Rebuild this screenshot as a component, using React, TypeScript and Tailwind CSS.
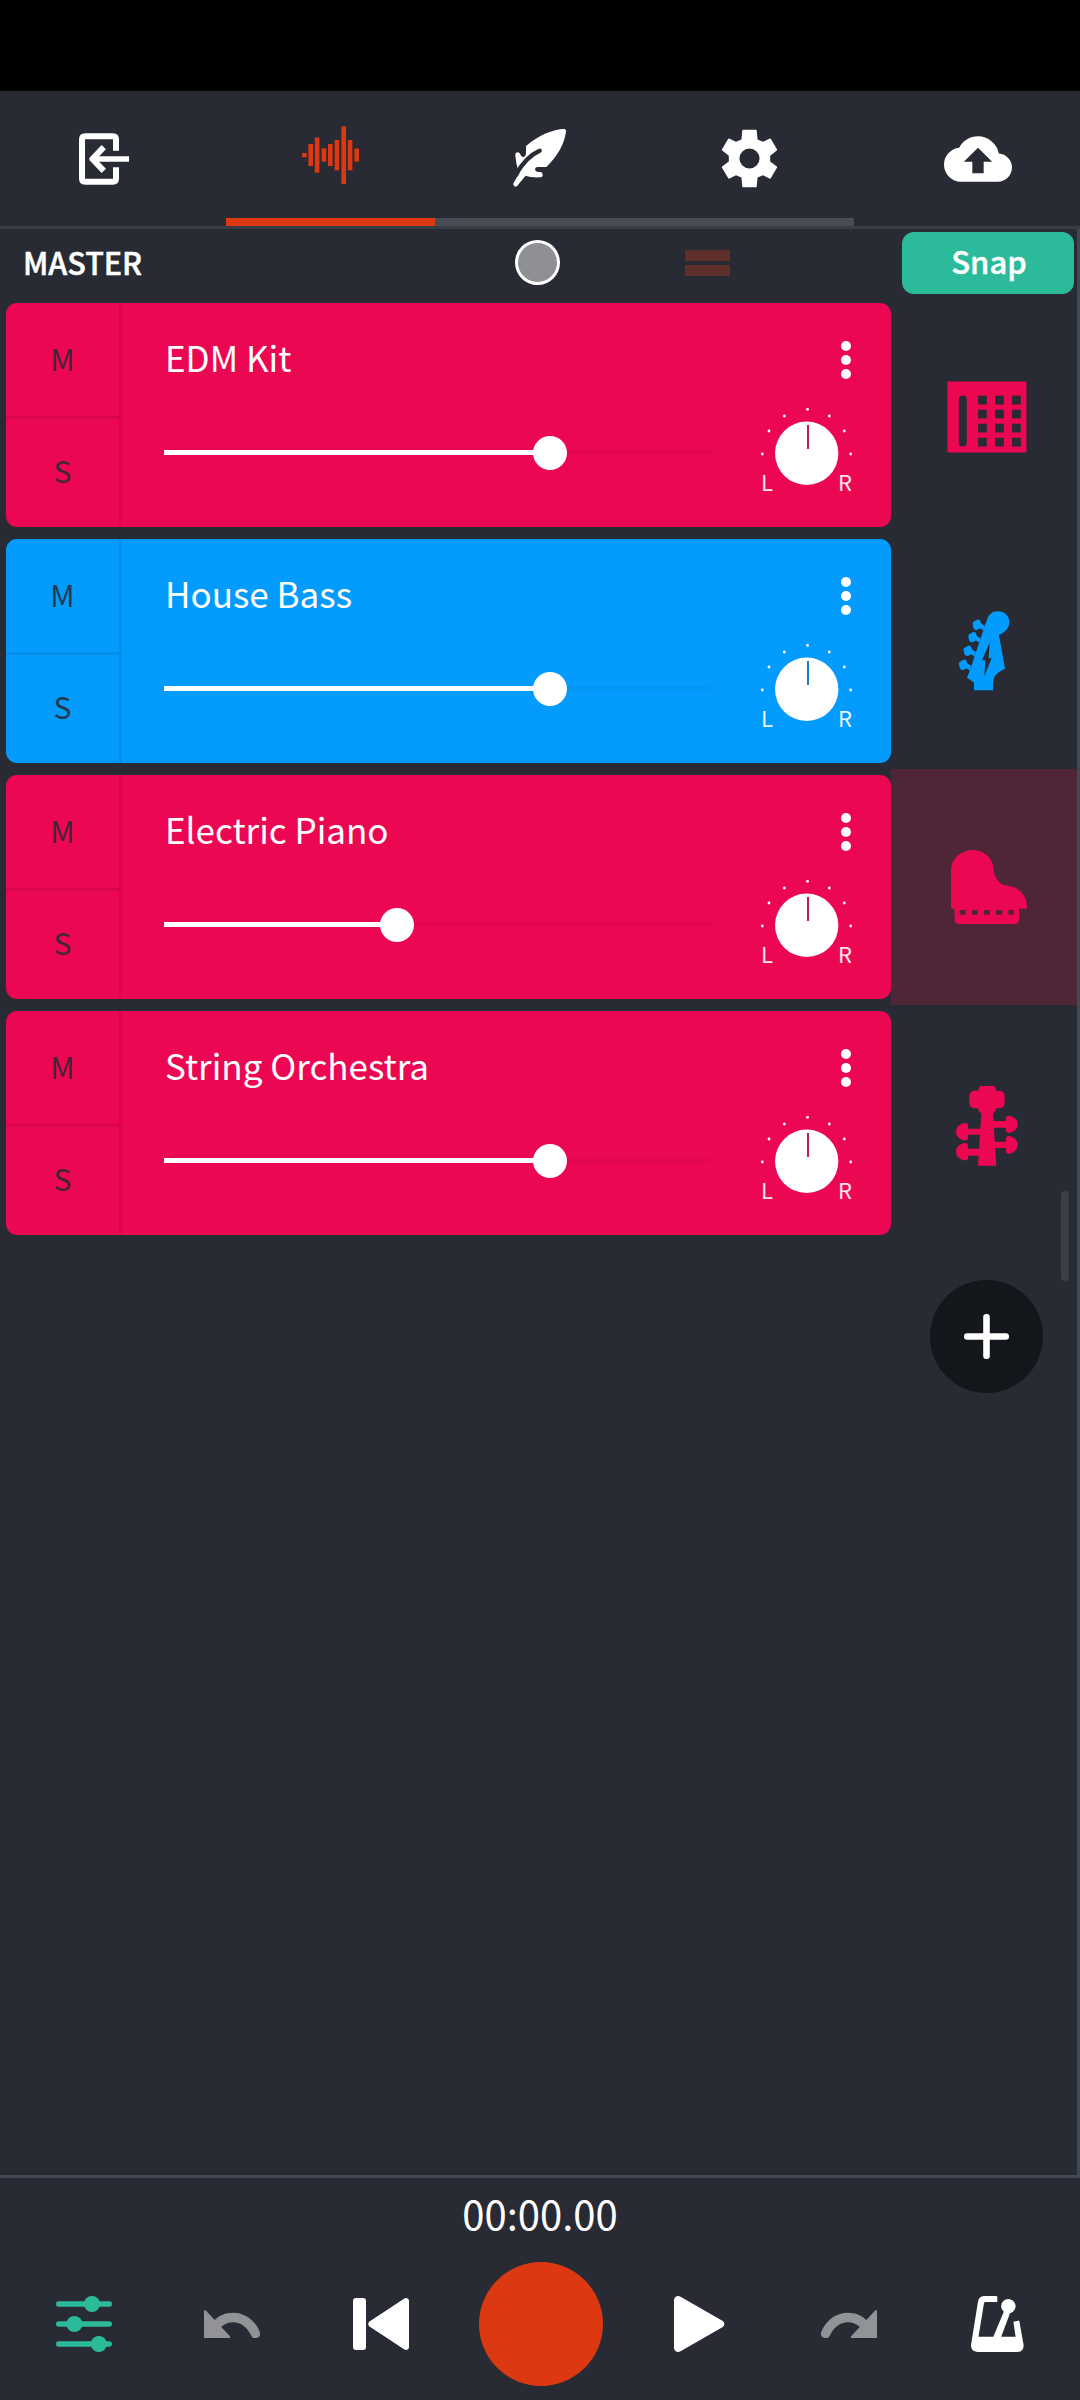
import React from "react";
import { MdCloudUpload } from "react-icons/md";

function ExitIcon() {
  return (
    <svg width="52" height="54" viewBox="78 132 52 54" fill="none" stroke="#fff" strokeWidth="6">
      <path d="M116 150.7V139.5Q116 136.3 112.8 136.3H85.2Q82 136.3 82 139.5V178.5Q82 181.7 85.2 181.7H112.8Q116 181.7 116 178.5V167.3" />
      <path d="M129 159H94" strokeWidth="5.6" />
      <path d="M103.8 147.2L92.4 159L103.8 170.8" strokeLinejoin="round" />
    </svg>
  );
}

const waveBars = [
  [301.7, 153, 157.3],
  [308, 144, 166],
  [314.4, 137.5, 172.7],
  [321.2, 148.3, 161.7],
  [327.6, 144, 166],
  [334.2, 140, 170.4],
  [341, 126.3, 184],
  [347.4, 140, 170.4],
  [354, 148.5, 161.7],
];

function WaveIcon() {
  return (
    <svg width="58" height="60" viewBox="301.6 125 58 60" fill="#dc3912">
      {waveBars.map(([x, a, b]) => (
        <rect key={x} x={x} y={a} width="4.6" height={b - a} />
      ))}
    </svg>
  );
}

function FeatherIcon() {
  return (
    <svg width="56" height="60" viewBox="34 39 168 180">
      <path
        fill="#fff"
        d="M76 93C112 62 158 42 190 42Q197 42 196 50C191 86 172 122 137 156H110Q103 157 103 163Q104 171 111 171H119Q126 172 126 179Q126 187 118 187C100 188 86 185 75 182Q62 197 51 211Q46 216 41 212Q37 208 39 203Q46 190 56 176Q46 150 44 122Q44 112 51 112Q58 112 60 120Q64 128 71 125Q76 122 76 113Z"
      />
      <path d="M46 178C66 143 94 117 117 107" fill="none" stroke="#282b33" strokeWidth="13" strokeLinecap="round" />
      <path d="M45 208C58 187 68 172 78 158" fill="none" stroke="#fff" strokeWidth="13" strokeLinecap="round" />
    </svg>
  );
}

function GearIcon() {
  return (
    <svg width="69" height="69" viewBox="0 0 24 24" fill="#fff">
      <path
        fillRule="evenodd"
        d="M9.5 2.1Q9.6 2 9.8 2H14.2Q14.4 2 14.5 2.2L14.8 5.4L16.7 6.2L19.1 5Q19.3 5 19.4 5.15L21.6 8.9Q21.6 9.1 21.5 9.2L19.2 11V13L21.5 14.8Q21.6 14.9 21.6 15.1L19.4 18.85Q19.3 19 19.1 19L16.7 17.8L14.8 18.6L14.5 21.8Q14.4 22 14.2 22H9.8Q9.6 22 9.5 21.8L9.2 18.6L7.3 17.8L4.9 19Q4.7 19 4.6 18.85L2.4 15.1Q2.4 14.9 2.5 14.8L4.8 13V11L2.5 9.2Q2.4 9.1 2.4 8.9L4.6 5.15Q4.7 5 4.9 5L7.3 6.2L9.2 5.4ZM12 8.5A3.5 3.5 0 1 0 12 15.5A3.5 3.5 0 1 0 12 8.5Z"
      />
    </svg>
  );
}

function PadIcon() {
  return (
    <svg className="mt-[3px]" width="80" height="72" viewBox="947.2 380.5 80 72">
      <rect x="947.7" y="381" width="79" height="71" rx="1" fill="#ec0753" />
      <g fill="#282b33">
        <rect x="959" y="395" width="8" height="51" rx="4" />
        {[978.3, 995.3, 1012.3].map((x) =>
          [395.2, 409.2, 423.2, 437.2].map((y) => <rect key={`${x}-${y}`} x={x} y={y} width="8.7" height="8.8" />)
        )}
      </g>
    </svg>
  );
}

function GuitarIcon() {
  return (
    <svg className="mr-[6px]" width="54" height="82" viewBox="171 90 162 246" fill="#039bfd">
      <path
        fillRule="evenodd"
        d="M222 331V308L201 293Q212 268 224 228L260 122C266 103 277 94 293 94C314 94 328 108 328 127C328 145 314 158 297 165L315 266Q279 280 279 308V331ZM269 188L246 241H256L253 289L275 235H266Z"
      />
      {[
        [232, 134],
        [219, 171],
        [205, 212],
        [191, 254],
      ].map(([x, y]) => (
        <path
          key={y}
          transform={`translate(${x} ${y})`}
          d="M-14 -2Q-15 -9 -8 -10Q-2 -16 5 -15Q10 -14 10 -6Q14 0 23 4L18 18Q10 8 4 13Q0 17 -7 15Q-13 12 -14 -2Z"
        />
      ))}
    </svg>
  );
}

function PianoIcon() {
  return (
    <svg className="ml-[3px]" width="78" height="76" viewBox="148 267 234 228" fill="#ec0753">
      <path
        fillRule="evenodd"
        d="M151 446V332C151 296 182 270 216 270C252 270 279 297 279 330C282 356 296 375 322 377C352 380 379 405 379 438V446H355V480Q354 491 343 492H174Q162 491 162 480V446ZM177 450V464H195V450ZM214 450V464H231V450ZM250 450V464H268V450ZM286 450V464H305V450ZM323 450V464H340V450Z"
      />
    </svg>
  );
}

function ViolinIcon() {
  return (
    <svg className="mt-[6px]" width="64" height="82" viewBox="164 135 192 246" fill="#ec0753">
      <path d="M240 138H281Q287 140 287 152H298Q313 154 313 168V190Q312 204 298 205H287Q287 216 278 220L288 377H233L243 220Q234 216 234 205H222Q208 203 207 190V168Q208 154 222 152H234Q234 141 240 138Z" />
      <path d="M200 266H242V284H200ZM200 326H240V347H200ZM278 243H320V263H278ZM280 305H320V324H280Z" />
      <path d="M203 257Q203 249 195 249C178 250 167 262 167 275S178 300 195 301Q203 301 203 293Z" />
      <path d="M203 317Q203 309 195 309C178 310 167 322 167 335S178 360 195 361Q203 361 203 353Z" />
      <path d="M317 235Q317 227 325 227C341 229 352 241 352 253S341 278 325 279Q317 279 317 271Z" />
      <path d="M317 296Q317 288 325 288C341 290 352 302 352 314S341 340 325 341Q317 341 317 333Z" />
    </svg>
  );
}

function PanKnob({ needle }: { needle: string }) {
  const dots = [
    [762.3, 454],
    [769, 431],
    [784.3, 416],
    [807.5, 409.3],
    [829.3, 416],
    [844.3, 431],
    [850.7, 454],
  ];
  return (
    <div className="relative h-[90px] w-[94px]">
      <svg width="94" height="80" viewBox="760 406 94 80" fill="#fff">
        {dots.map(([x, y]) => (
          <circle key={x} cx={x} cy={y} r="1.4" />
        ))}
        <circle cx="806.7" cy="453.3" r="31.7" />
        <rect x="807" y="425" width="2" height="24" fill={needle} />
      </svg>
      <div className="absolute inset-x-0 top-[62px] flex justify-between pr-[2px] pl-px text-[22px] leading-[26px] text-white/90">
        <span>L</span>
        <span>R</span>
      </div>
    </div>
  );
}

type Track = {
  name: string;
  bg: string;
  needle: string;
  fill: string;
  icon: React.ReactNode;
  selected?: boolean;
};

const tracks: Track[] = [
  { name: "EDM Kit", bg: "bg-[#ec0753]", needle: "#c01a58", fill: "w-[386px]", icon: <PadIcon /> },
  { name: "House Bass", bg: "bg-[#039bfd]", needle: "#1a7fc4", fill: "w-[386px]", icon: <GuitarIcon /> },
  { name: "Electric Piano", bg: "bg-[#ec0753]", needle: "#c01a58", fill: "w-[233px]", icon: <PianoIcon />, selected: true },
  { name: "String Orchestra", bg: "bg-[#ec0753]", needle: "#c01a58", fill: "w-[386px]", icon: <ViolinIcon /> },
];

function TrackRow({ track }: { track: Track }) {
  return (
    <div className="flex h-[236px]">
      <div className="w-[891px] py-[6px] pl-[6px]">
        <div className={`flex h-[224px] overflow-hidden rounded-[11px] ${track.bg}`}>
          <div className="flex w-[116px] flex-col border-r-[3px] border-black/8 text-[30px] text-[#282b33]/90">
            <div className="flex h-[116px] items-center justify-center border-b-[3px] border-black/8 pb-[2px]">M</div>
            <div className="flex h-[108px] items-center justify-center pb-[6px]">S</div>
          </div>
          <div className="flex-1 pl-[42px]">
            <div className="flex h-[103px] items-start justify-between pr-[40px]">
              <span className="mt-[34px] pl-[1px] text-[35px] leading-[40px] text-white">{track.name}</span>
              <div className="mt-[38px] flex flex-col gap-[4px]">
                <i className="size-[10px] rounded-full bg-white" />
                <i className="size-[10px] rounded-full bg-white" />
                <i className="size-[10px] rounded-full bg-white" />
              </div>
            </div>
            <div className="flex">
              <div className="mt-[44px] h-[5px] w-[547px] bg-black/3">
                <div className={`relative h-[5px] bg-white ${track.fill}`}>
                  <span className="absolute -top-[14px] -right-[17px] size-[34px] rounded-full bg-white" />
                </div>
              </div>
              <div className="ml-[49px]">
                <PanKnob needle={track.needle} />
              </div>
            </div>
          </div>
        </div>
      </div>
      <div className={`flex w-[186px] items-center justify-center pl-[6px] ${track.selected ? "bg-[#4f2638]" : ""}`}>
        {track.icon}
      </div>
    </div>
  );
}

const curvedArrow =
  "M0 1Q.6-.6 1.8.6L10.7 10C15 5.5 21.5 2.7 29 2.7C41 2.7 51.5 10.5 55.7 22A4.6 4.6 0 0 1 47.3 25.7C43 17.5 37.5 12.3 29 12.3C24.5 12.3 20.5 14 17.2 17L26 26.3Q26.7 28 25 28H0Z";

function Footer() {
  return (
    <footer className="h-[225px] border-t-[3px] border-[#444a55]">
      <div className="h-[68px] pt-[5px] text-center text-[40px] leading-[60px] text-white">00:00.00</div>
      <div className="flex h-[156px] items-center pl-[10px]">
        <button className="flex w-[148px] justify-center">
          <svg width="56" height="56" viewBox="0 0 56 56" fill="#2bbb9b">
            <rect y="5.2" width="56" height="5.6" rx="2.8" />
            <rect y="25.2" width="56" height="5.6" rx="2.8" />
            <rect y="45.2" width="56" height="5.6" rx="2.8" />
            <circle cx="36" cy="8" r="8" />
            <circle cx="18.4" cy="28" r="8" />
            <circle cx="42.8" cy="48" r="8" />
          </svg>
        </button>
        <button className="flex w-[148px] justify-center">
          <svg width="56" height="28" viewBox="0 0 56 28" fill="#929397">
            <path d={curvedArrow} />
          </svg>
        </button>
        <button className="flex w-[148px] justify-center pl-[2px]">
          <svg width="56" height="52" viewBox="0 0 56 52" fill="#fff">
            <rect width="13" height="52" rx="3" />
            <path d="M51 .7Q53.5-.7 55.3 1Q56 2 56 3V49Q56 50 55.3 51Q53.5 52.7 51 51.3L16.5 28.5Q13.8 26 16.5 23.5Z" />
          </svg>
        </button>
        <button className="flex w-[174px] justify-center">
          <span className="size-[124px] rounded-full bg-[#dc3912]" />
        </button>
        <button className="flex w-[148px] justify-center">
          <svg width="56" height="56" viewBox="0 0 56 56" fill="#fff">
            <path d="M0 4Q.3 .4 3.8 0Q5.4 0 7 .9L48.8 25Q52 28 48.8 31L7 55.1Q5.4 56 3.8 56Q.3 55.6 0 52Z" />
          </svg>
        </button>
        <button className="flex w-[148px] justify-center pr-[2px]">
          <svg className="-scale-x-100" width="56" height="28" viewBox="0 0 56 28" fill="#929397">
            <path d={curvedArrow} />
          </svg>
        </button>
        <button className="flex w-[148px] justify-center">
          <svg width="54" height="56" viewBox="0 0 54 56" fill="#fff">
            <path
              fillRule="evenodd"
              d="M0 49L7 5.5Q8 .3 13 0H25Q26.3 0 26.3 1.3V6H14.5Q13.2 6 13 7.2L7.5 40.7H22.3L32.8 15.8A7.2 7.2 0 1 1 39 17.2L30.2 40.7H44.6L42.4 25.8L48.2 24.4L52.6 49Q53 55.4 46.6 56H6.4Q-.3 55.4 0 49Z"
            />
          </svg>
        </button>
      </div>
    </footer>
  );
}

export default function App() {
  return (
    <div className="flex h-[2400px] w-[1080px] flex-col overflow-hidden bg-[#282b33] font-['Noto_Sans_CJK_SC',sans-serif]">
      <div className="h-[91px] bg-black" />
      <header className="flex h-[138px] border-b-[3px] border-[#383d46]">
        <button className="flex w-[226px] items-center justify-center pr-[18px]">
          <ExitIcon />
        </button>
        <div className="grid w-[628px] grid-cols-3">
          <button className="flex items-start justify-center border-b-[8px] border-[#dc3912] pt-[34px]">
            <WaveIcon />
          </button>
          <button className="flex items-start justify-center border-b-[8px] border-[#484c55] pt-[37px]">
            <FeatherIcon />
          </button>
          <button className="flex items-start justify-center border-b-[8px] border-[#484c55] pt-[33px]">
            <GearIcon />
          </button>
        </div>
        <button className="flex w-[226px] items-center justify-center pl-[22px]">
          <MdCloudUpload className="size-[68px] text-white" />
        </button>
      </header>

      <main className="relative flex-1 border-r-[3px] border-[#424852]">
        <div className="flex h-[68px] items-start">
          <span className="mt-[13px] w-[171px] pl-[23px] text-[30.5px] leading-[40px] font-medium text-white [-webkit-text-stroke:0.5px_white]">
            MASTER
          </span>
          <div className="relative mt-[21px] flex w-[559px] flex-col gap-[4px]">
            <div className="flex h-[11px]">
              <div className="w-[514px] bg-[#272a31]" />
              <div className="w-[45px] bg-[#5f3029]" />
            </div>
            <div className="flex h-[11px]">
              <div className="w-[514px] bg-[#272a31]" />
              <div className="w-[45px] bg-[#5f3029]" />
            </div>
            <span className="absolute -top-[10px] left-[344px] size-[45px] rounded-full border-[3px] border-white bg-[#8f9094]" />
          </div>
          <button className="mt-[3px] ml-[172px] flex h-[62px] w-[172px] items-center justify-center rounded-[12px] bg-[#2bbb9b] pb-[3px] pl-[2px] text-[31px] font-medium text-white [-webkit-text-stroke:0.4px_white]">
            Snap
          </button>
        </div>
        {tracks.map((t) => (
          <TrackRow key={t.name} track={t} />
        ))}
        <div className="flex justify-end pt-[39px] pr-[34px]">
          <button className="flex size-[113px] items-center justify-center rounded-full bg-[#13161a]">
            <svg width="45" height="45" viewBox="0 0 45 45" fill="#fff">
              <rect y="19.2" width="45" height="6.6" rx="3" />
              <rect x="19.2" width="6.6" height="45" rx="3" />
            </svg>
          </button>
        </div>
        <div className="absolute top-[962px] right-[8px] h-[90px] w-[8px] rounded-full bg-[#3b3e46]" />
      </main>
      <Footer />
    </div>
  );
}
